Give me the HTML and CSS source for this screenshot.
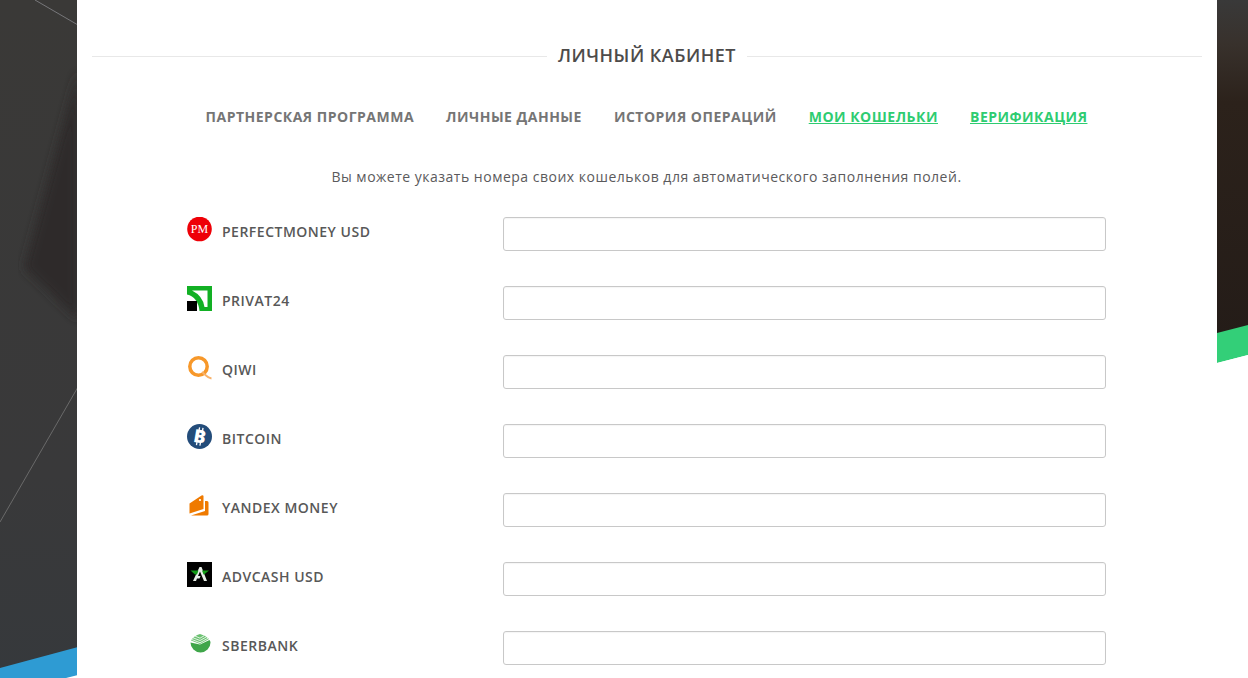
FILE: index.html
```html
<!DOCTYPE html>
<html lang="ru">
<head>
<meta charset="utf-8">
<title>Личный кабинет</title>
<link rel="stylesheet" href="styles.css">
</head>
<body>
<svg class="backdrop" width="1248" height="678" viewBox="0 0 1248 678" aria-hidden="true">
  <defs>
    <linearGradient id="bgl" x1="0" y1="0" x2="0" y2="1">
      <stop offset="0" stop-color="#3a3937"/><stop offset="0.7" stop-color="#39393a"/><stop offset="1" stop-color="#36393c"/>
    </linearGradient>
    <linearGradient id="bgr" x1="0" y1="0" x2="0" y2="1">
      <stop offset="0" stop-color="#393939"/><stop offset="0.13" stop-color="#38312c"/><stop offset="0.3" stop-color="#2c221b"/><stop offset="1" stop-color="#241c18"/>
    </linearGradient>
    <filter id="soft"><feGaussianBlur stdDeviation="5"/></filter>
  </defs>
  <rect width="100" height="678" fill="url(#bgl)"/>
  <rect x="1200" width="48" height="340" fill="url(#bgr)"/>
  <path d="M78 70 L24 268 L78 320 Z" fill="#2d2b2a" filter="url(#soft)"/>
  <path d="M35 0 L78 25" stroke="#77777a" stroke-width="1" fill="none"/>
  <path d="M78 387 L0 522" stroke="#6a6a6a" stroke-width="1" fill="none"/>
  <path d="M0 668 L78 647 V678 H0 Z" fill="#2e9bd3"/>
  <path d="M78 675 L66 678 H78 Z" fill="#fff"/>
  <path d="M1217 333 L1248 325 V355 L1217 363 Z" fill="#33cf78"/>
  <path d="M1217 363 L1248 355 V678 H1217 Z" fill="#fff"/>
</svg>
<main class="panel">
  <h1 class="title"><span>Личный кабинет</span></h1>
  <nav class="tabs">
    <a class="tab" href="#">Партнерская программа</a>
    <a class="tab" href="#">Личные данные</a>
    <a class="tab" href="#">История операций</a>
    <a class="tab tab-active" href="#">Мои кошельки</a>
    <a class="tab tab-active" href="#">Верификация</a>
  </nav>
  <p class="intro">Вы можете указать номера своих кошельков для автоматического заполнения полей.</p>
  <form class="wallets">
    <div class="wallet">
      <label class="wallet-label">
        <svg class="icon" viewBox="0 0 25 25"><circle cx="12.5" cy="12" r="12.3" fill="#ee0007"/><text x="12.5" y="16" class="pm">PM</text></svg>
        <span>PerfectMoney USD</span>
      </label>
      <input class="field" type="text">
    </div>
    <div class="wallet">
      <label class="wallet-label">
        <svg class="icon" viewBox="0 0 25 25"><rect width="25" height="25" fill="#12b024"/><path d="M5 4.500 H20.500 V21 H17.500 Q16 10 5 4.500 Z" fill="#fff"/><path d="M0 8.500 Q11 11 12.500 25 H0 Z" fill="#fff"/><rect y="15" width="10" height="10" fill="#000"/></svg>
        <span>Privat24</span>
      </label>
      <input class="field" type="text">
    </div>
    <div class="wallet">
      <label class="wallet-label">
        <svg class="icon" viewBox="0 0 25 25"><circle cx="11.500" cy="11.500" r="8.700" fill="none" stroke="#f7982a" stroke-width="3.500"/><path d="M15 17 L19 20.500 Q21.500 23 24.500 23.500" fill="none" stroke="#f8b26a" stroke-width="1.800"/></svg>
        <span>Qiwi</span>
      </label>
      <input class="field" type="text">
    </div>
    <div class="wallet">
      <label class="wallet-label">
        <svg class="icon" viewBox="0 0 25 25"><circle cx="12.500" cy="12.500" r="12.500" fill="#234c7a"/><text x="12.800" y="18.800" class="btc" transform="rotate(10 12.500 12.500)">B</text><path d="M11 3.500v3M14.500 3.500v3M11 18.500v3M14.500 18.500v3" stroke="#fff" stroke-width="1.300" transform="rotate(10 12.500 12.500)"/></svg>
        <span>Bitcoin</span>
      </label>
      <input class="field" type="text">
    </div>
    <div class="wallet">
      <label class="wallet-label">
        <svg class="icon" viewBox="0 0 25 25"><path d="M2.500 10.500 L14.500 2.500 Q16.500 1.500 16.500 3.500 V16 L2.500 20.500 Z" fill="#ef7a00"/><path d="M18 8 H20 Q21.500 8 21.500 9.500 V21 Q21.500 22.500 20 22.500 H4 L18 18 Z" fill="#ef7a00"/><circle cx="13" cy="7" r="1.100" fill="#fff"/></svg>
        <span>Yandex Money</span>
      </label>
      <input class="field" type="text">
    </div>
    <div class="wallet">
      <label class="wallet-label">
        <svg class="icon" viewBox="0 0 25 25"><rect width="25" height="25" fill="#000"/><path d="M12.500 5 H14.500 L20 19 H17 L13 9.500 L11 14 H13.500 L12.500 16.500 H10 L9 19 H6 Z" fill="#e8efe8"/><path d="M3.500 8.500 H11.500 L10 12.500 H8 Z" fill="#129a16"/><path d="M15 8.500 H22 L17 12.500 H16.500 Z" fill="#129a16"/></svg>
        <span>AdvCash USD</span>
      </label>
      <input class="field" type="text">
    </div>
    <div class="wallet">
      <label class="wallet-label">
        <svg class="icon" viewBox="0 0 25 25"><path d="M3.500 11.500 A10 10 0 0 0 23.500 11.500 Q23.500 10 22.500 9 L13 13.500 Z" fill="#3fa64a"/><path d="M4 9.500 L13 13 L22 8 Q18 4 13 3 Q7 4.500 4 9.500 Z" fill="#6cc272"/><path d="M4.800 8.500 L13 11.700 L21 7.200 M6 6.800 L13 9.500 L19.500 5.800 M8 5 L13 7.200 L17.500 4.500" stroke="#fff" stroke-width="0.800" fill="none"/></svg>
        <span>Sberbank</span>
      </label>
      <input class="field" type="text">
    </div>
  </form>
</main>
</body>
</html>
```
FILE: styles.css
```css
html, body {
  margin: 0;
  height: 678px;
  overflow: hidden;
  background: #fff;
}
body {
  font-family: "Open Sans", "Liberation Sans", sans-serif;
  color: #4f4f4f;
}
.backdrop {
  position: absolute;
  left: 0;
  top: 0;
}
.panel {
  position: relative;
  width: 1140px;
  height: 678px;
  margin-left: 77px;
  padding: 43px 15px 0;
  box-sizing: border-box;
  background: #fff;
}
.title {
  display: flex;
  align-items: center;
  gap: 11px;
  margin: 0;
  font-size: 18px;
  line-height: 24px;
  font-weight: 600;
  letter-spacing: 0.5px;
  text-transform: uppercase;
  white-space: nowrap;
  color: #4d4b4a;
}
.title::before,
.title::after {
  content: "";
  flex: 1;
  height: 1px;
  background: #e8e8e8;
  margin-top: 3px;
}
.tabs {
  display: flex;
  justify-content: center;
  gap: 32px;
  margin-top: 38px;
  padding-right: 1px;
}
.tab {
  font-size: 14px;
  line-height: 24px;
  font-weight: 700;
  letter-spacing: 0.5px;
  text-transform: uppercase;
  text-decoration: none;
  color: #757575;
}
.tab-active {
  color: #2ecc71;
  text-decoration: underline;
}
.intro {
  margin: 36px 0 0;
  padding-right: 1px;
  font-size: 14px;
  line-height: 24px;
  letter-spacing: 0.5px;
  text-align: center;
  color: #5b5a5c;
}
.wallets {
  display: flex;
  flex-direction: column;
  gap: 35px;
  margin-top: 28px;
  padding-left: 95px;
}
.wallet {
  display: grid;
  grid-template-columns: 316px 603px;
}
.wallet-label {
  display: flex;
  align-items: flex-start;
  gap: 10px;
  font-size: 14px;
  line-height: 30px;
  font-weight: 600;
  letter-spacing: 0.5px;
  text-transform: uppercase;
  color: #585858;
}
.icon {
  width: 25px;
  height: 25px;
  flex: none;
}
.field {
  height: 34px;
  box-sizing: border-box;
  border: 1px solid #c8c8c8;
  border-radius: 3px;
  background: #fff;
  box-shadow: inset 0 1px 1px rgba(0, 0, 0, 0.04);
}
.pm {
  font-family: "Liberation Serif", serif;
  font-size: 12px;
  font-weight: 400;
  letter-spacing: 0;
  fill: #fff;
  text-anchor: middle;
}
.btc {
  font-family: "Open Sans", sans-serif;
  font-size: 18px;
  font-weight: 800;
  letter-spacing: 0;
  fill: #fff;
  text-anchor: middle;
}
```
